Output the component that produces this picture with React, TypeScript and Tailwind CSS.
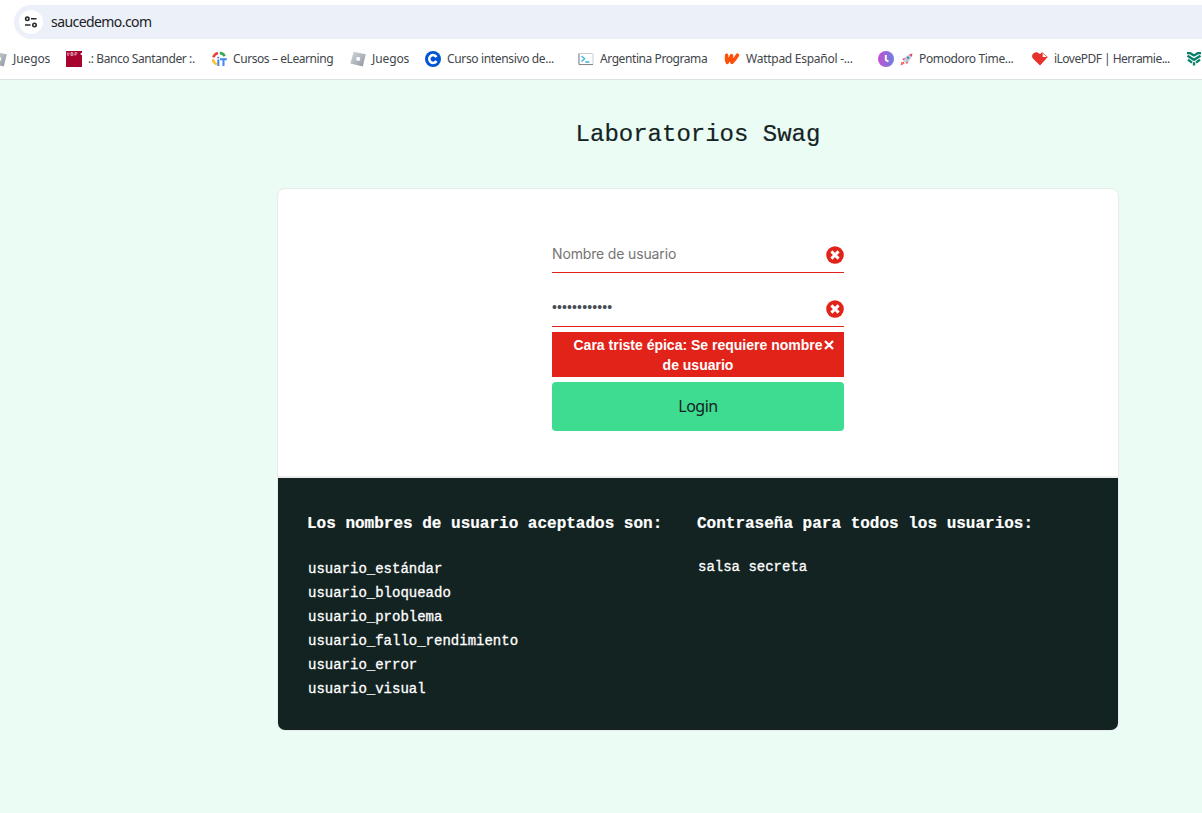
import type { ReactNode } from 'react';

const RobloxIcon = () => (
  <svg width="16" height="16" viewBox="0 0 16 16" className="shrink-0">
    <defs>
      <linearGradient id="steel" x1="0" y1="0" x2="1" y2="1">
        <stop offset="0" stopColor="#d3d8dc" />
        <stop offset="1" stopColor="#8e979f" />
      </linearGradient>
    </defs>
    <path d="M3.6.8 15.8 3.3 12.8 15.4.4 12.4Z" fill="url(#steel)" />
    <path d="m6.8 5.8 3.5.8-.8 3.5-3.5-.8Z" fill="#fff" />
  </svg>
);

const UbpIcon = () => (
  <svg width="16" height="16" viewBox="0 0 16 16" className="shrink-0">
    <path d="M0 0h16v16H0z" fill="#a6032f" />
    <path d="M1.300 1.500v2.200q0 .8.8.8t.8-.8V1.500M5 4.500v-3h1.200q.8 0 .8.7t-.8.7H5m1.200 0q1 0 1 .8t-1 .8H5M9 4.800V1.500h1q1 0 1 .9t-1 .9H9" fill="none" stroke="#efb9c9" strokeWidth=".8" />
    <circle cx="15.500" cy="3" r="1" fill="#fff" />
  </svg>
);

const ItIcon = () => (
  <svg width="16" height="16" viewBox="0 0 16 16" fill="none" className="shrink-0">
    <path d="M2.300 6.300Q3.400 3 6.900 1.900" stroke="#e8413a" strokeWidth="2.600" />
    <path d="M8.800 1.900q3.400.5 4.900 3.200" stroke="#36a853" strokeWidth="2.600" />
    <path d="M1.800 8.200q.7 3.700 4 5.100" stroke="#fbc02d" strokeWidth="2.400" />
    <path d="M7.300 8.500V15M9 8.300h6.800M12.500 8.300V15" stroke="#4285f4" strokeWidth="2" />
    <path d="M6.300 5.800h2v1.600h-2z" fill="#4285f4" />
  </svg>
);

const CourseraIcon = () => (
  <svg width="16" height="16" viewBox="0 0 16 16" fill="none" className="shrink-0">
    <circle cx="8" cy="8" r="8" fill="#0056d2" />
    <path d="M11.500 6A3.900 3.900 0 1 0 11.500 10" stroke="#fff" strokeWidth="2.500" />
  </svg>
);

const TerminalIcon = () => (
  <svg width="16" height="16" viewBox="0 0 16 16" fill="none" className="shrink-0">
    <rect x=".7" y="2.500" width="14.300" height="11.200" rx="1" fill="#fff" stroke="#c9cdd0" />
    <path d="M1 2.500v11h14" stroke="#84898d" />
    <path d="m3.500 5 3.200 2.800-3.200 2.800M7.300 11h4" stroke="#38b6e5" strokeWidth="1.300" />
  </svg>
);

const WattpadIcon = () => (
  <svg width="16" height="16" viewBox="0 0 16 16" fill="none" className="shrink-0">
    <path d="M2.600 4.200q-.4 5 .6 7.200Q5.300 9 7.600 4.700q-.5 4.200.4 6.600 2.700-2.200 5.500-7.100" stroke="#ff500a" strokeWidth="3.500" strokeLinecap="round" strokeLinejoin="round" />
  </svg>
);

const ClockIcon = () => (
  <svg width="16" height="16" viewBox="0 0 16 16" fill="none" className="shrink-0">
    <defs>
      <linearGradient id="dusk">
        <stop offset="0" stopColor="#c450cf" />
        <stop offset="1" stopColor="#6b7fe3" />
      </linearGradient>
    </defs>
    <circle cx="8" cy="8" r="8" fill="url(#dusk)" />
    <path d="M7.800 4v5l2.700 1.500" stroke="#fff" strokeWidth="1.900" />
  </svg>
);

const RocketIcon = () => (
  <svg width="13" height="13" viewBox="0 0 13 13" className="shrink-0">
    <path d="M2 6 5 4.800l3.200.1.2 3.200L7 11.500 5.700 9 3.800 7.200Z" fill="#ef3d68" />
    <path d="M3.400 7.600Q6 1.600 12.200.7 11.800 6.800 5.700 9.800Z" fill="#c3ccd5" />
    <path d="M9.200 1.800Q10.800.8 12.400.6q0 1.700-.8 3.200Z" fill="#ef3d68" />
    <circle cx="8" cy="4.800" r="1.200" fill="#4087bd" />
    <path d="M.5 12.500 1.500 9 4 8.700l.5 2Z" fill="#f05a67" />
    <path d="m1.800 11.200.7-1.700 1.400.3Z" fill="#f9b233" />
  </svg>
);

const HeartIcon = () => (
  <svg width="16" height="16" viewBox="0 0 16 16" className="shrink-0">
    <path d="M8 14.500.9 7.500Q-.7 5 .8 2.900 2.600.8 5 1.300l3 1.800 2.200-1.800 5.600 4.600Z" fill="#e5322d" />
    <path d="M10.700 2.300v3.600h4.200Z" fill="#fff" />
  </svg>
);

const LeafIcon = () => (
  <svg width="16" height="16" viewBox="0 0 16 16" fill="none" stroke="#087f68" strokeWidth="2.300" className="shrink-0">
    <path d="M1 2.200h3.200L8 4.500l3.800-2.300H15" />
    <path d="M1.500 4.800 8 8.800l6.500-4M2 8.600l4 3M14 8.600l-4 3M8 11.300v3.200" />
  </svg>
);

const ErrorCircle = () => (
  <svg width="18" height="18" viewBox="0 0 18 18" className="shrink-0">
    <circle cx="9" cy="9" r="8.800" fill="#e2231a" />
    <path d="m5.400 5.400 7.200 7.200m0-7.200-7.200 7.200" stroke="#fff" strokeWidth="2.900" />
  </svg>
);

type BookmarkProps = { icon?: ReactNode; label: string; box: string; text: string };

const Bookmark = ({ icon, label, box, text }: BookmarkProps) => (
  <div className={`flex shrink-0 items-center gap-[6px] ${box}`}>
    {icon}
    {label && <span className={`whitespace-nowrap ${text}`}>{label}</span>}
  </div>
);

const bookmarks: BookmarkProps[] = [
  { icon: <RobloxIcon />, label: 'Juegos', box: 'w-[75px]', text: 'tracking-[-0.1px]' },
  { icon: <UbpIcon />, label: '.: Banco Santander :.', box: 'w-[145px]', text: 'tracking-[-0.42px]' },
  { icon: <ItIcon />, label: 'Cursos – eLearning', box: 'w-[139px]', text: 'tracking-[-0.42px]' },
  { icon: <RobloxIcon />, label: 'Juegos', box: 'w-[75px]', text: 'tracking-[-0.1px]' },
  { icon: <CourseraIcon />, label: 'Curso intensivo de...', box: 'w-[153px]', text: 'tracking-[-0.35px]' },
  { icon: <TerminalIcon />, label: 'Argentina Programa', box: 'w-[146px]', text: 'tracking-[-0.42px]' },
  { icon: <WattpadIcon />, label: 'Wattpad Español -...', box: 'w-[154px]', text: 'tracking-[-0.26px]' },
  { icon: <><ClockIcon /><RocketIcon /></>, label: 'Pomodoro Time...', box: 'w-[154px]', text: 'tracking-[-0.36px]' },
  { icon: <HeartIcon />, label: 'iLovePDF | Herramie...', box: 'w-[154px]', text: 'tracking-[-0.52px]' },
  { icon: <LeafIcon />, label: '', box: 'w-[16px]', text: '' },
];

const users = ['usuario_estándar', 'usuario_bloqueado', 'usuario_problema', 'usuario_fallo_rendimiento', 'usuario_error', 'usuario_visual'];

export default function App() {
  return (
    <div className="flex h-[813px] w-[1202px] flex-col overflow-hidden bg-[#ebfcf5]">
      <header className="h-20 shrink-0 overflow-hidden border-b border-[#dce4df] bg-white pt-[5px] font-['Noto_Sans',sans-serif] text-[#42464a]">
        <div className="ml-[14px] flex h-[34px] items-center gap-2 rounded-l-full bg-[#ebf0f9] pl-[5px]">
          <div className="flex size-6 items-center justify-center rounded-full bg-white">
            <svg width="14" height="14" viewBox="0 0 14 14" fill="none" stroke="#272a2d" strokeWidth="1.600">
              <circle cx="3.300" cy="3.800" r="1.700" />
              <path d="M7 3.800h5.500M1 10h5.500" />
              <circle cx="10.500" cy="10" r="1.700" />
            </svg>
          </div>
          <span className="pb-px text-[14px] tracking-[-0.57px] text-[#202124]">saucedemo.com</span>
        </div>
        <div className="-ml-[9px] flex h-10 items-center text-[12px]">
          {bookmarks.map((b, i) => <Bookmark key={i} {...b} />)}
        </div>
      </header>
      <main className="flex flex-col pl-[277px]">
        <h1 className="flex h-[108px] w-[842px] items-center justify-center pt-[2px] font-['Liberation_Mono',monospace] text-[24px] text-[#132322] [-webkit-text-stroke:0.2px_#132322]">Laboratorios Swag</h1>
        <section className="w-[842px] overflow-hidden rounded-lg border border-[#e8ebe9] bg-white">
          <div className="flex h-[289px] flex-col items-center border-b-2 border-[#ededed] pt-[43px]">
            <form className="flex w-[292px] flex-col">
              <div className="flex h-[41px] items-center justify-between border-b border-[#e2231a] pt-[6px]">
                <span className="pb-[4px] font-['Inter',sans-serif] text-[14px] tracking-[-0.15px] text-[#757575]">Nombre de usuario</span>
                <ErrorCircle />
              </div>
              <div className="mt-[13px] flex h-[41px] items-center justify-between border-b border-[#e2231a] pt-[6px]">
                <span className="pb-[3px] font-['Liberation_Sans',sans-serif] text-[14px] tracking-[0.12px] text-[#484c55]">••••••••••••</span>
                <ErrorCircle />
              </div>
              <div className="relative mt-[5px] h-[45px] bg-[#e2231a] pt-[3px] text-center font-['Liberation_Sans',sans-serif] text-[14px] leading-5 font-bold text-white">
                Cara triste épica: Se requiere nombre<br />de usuario
                <svg width="10" height="10" viewBox="0 0 10 10" className="absolute top-[8px] right-[10px]">
                  <path d="m1 1 8 8m0-8-8 8" stroke="#fff" strokeWidth="2.300" />
                </svg>
              </div>
              <button type="button" className="mt-[5px] h-[49px] rounded bg-[#3ddc91] pb-px font-['Noto_Sans',sans-serif] text-[16px] tracking-[-0.5px] text-[#132322]">Login</button>
            </form>
          </div>
          <div className="flex h-[252px] bg-[#132322] pl-[30px] font-['Liberation_Mono',monospace] text-white">
            <div className="w-[390px] pt-[36px]">
              <h4 className="-ml-px text-[16px] leading-5 font-bold [-webkit-text-stroke:0.2px_#fff]">Los nombres de usuario aceptados son:</h4>
              <ul className="mt-[23px] text-[14px] leading-6 [-webkit-text-stroke:0.3px_#fff]">
                {users.map((u) => <li key={u}>{u}</li>)}
              </ul>
            </div>
            <div className="pt-[36px]">
              <h4 className="-ml-px text-[16px] leading-5 font-bold [-webkit-text-stroke:0.2px_#fff]">Contraseña para todos los usuarios:</h4>
              <p className="mt-[21px] text-[14px] leading-6 [-webkit-text-stroke:0.3px_#fff]">salsa secreta</p>
            </div>
          </div>
        </section>
      </main>
    </div>
  );
}
